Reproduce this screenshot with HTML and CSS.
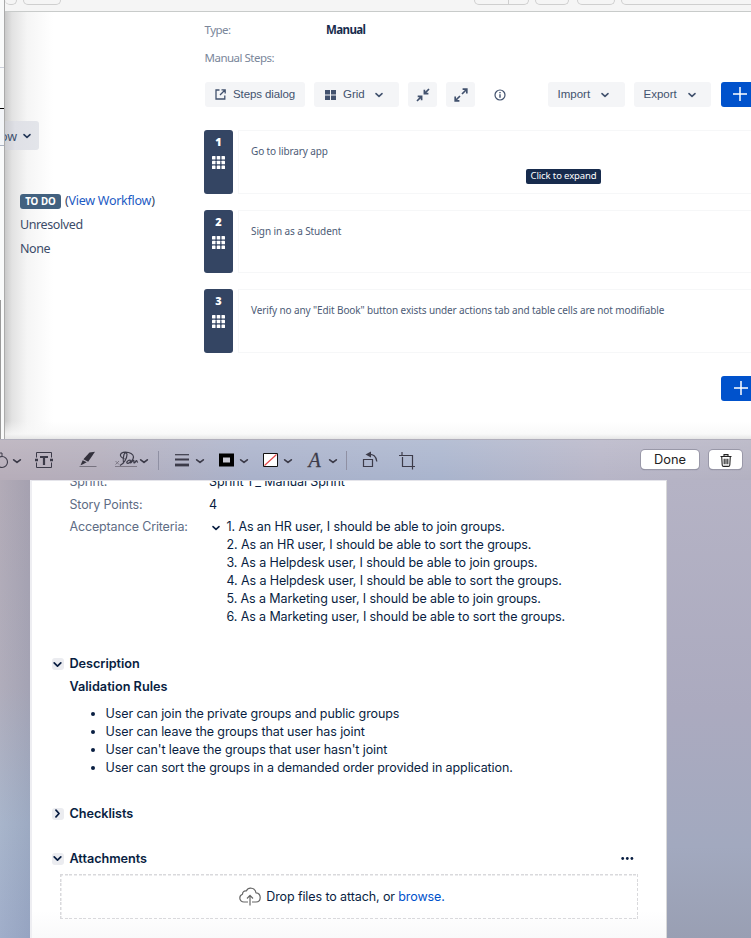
FILE: index.html
```html
<!DOCTYPE html>
<html lang="en">
<head>
<meta charset="utf-8">
<title>Manual Steps</title>
<link rel="stylesheet" href="styles.css">
</head>
<body>
<svg width="0" height="0" class="defs">
  <symbol id="chev" viewBox="0 0 10 10"><path d="M2 3.6l3 2.8 3-2.8" fill="none" stroke="currentColor" stroke-width="1.6" stroke-linecap="round" stroke-linejoin="round"/></symbol>
  <symbol id="dots" viewBox="0 0 13 13"><g fill="#fff"><rect width="3.5" height="3.5" rx=".6"/><rect x="4.75" width="3.5" height="3.5" rx=".6"/><rect x="9.5" width="3.5" height="3.5" rx=".6"/><rect y="4.75" width="3.5" height="3.5" rx=".6"/><rect x="4.75" y="4.75" width="3.5" height="3.5" rx=".6"/><rect x="9.5" y="4.75" width="3.5" height="3.5" rx=".6"/><rect y="9.5" width="3.5" height="3.5" rx=".6"/><rect x="4.75" y="9.5" width="3.5" height="3.5" rx=".6"/><rect x="9.5" y="9.5" width="3.5" height="3.5" rx=".6"/></g></symbol>
  <symbol id="plus" viewBox="0 0 14 14"><path d="M7 0v14M0 7h14" stroke="#fff" stroke-width="1.5"/></symbol>
</svg>

<section class="browser">
  <div class="edge"><i class="e1"></i><i class="e2"></i><i class="e3"></i><i class="e4"></i></div>
  <div class="window">
    <div class="chrome">
      <span class="tab t1"></span><span class="tab t2"></span><span class="tab t3"></span><span class="tab t4"></span><span class="tab t5"></span><span class="tab t6"></span><span class="tab t7"></span>
    </div>
    <div class="page">
      <aside class="side">
        <div class="flowbtn"><span>ow</span><svg width="10" height="10"><use href="#chev"/></svg></div>
        <div class="status"><b class="todo">TO DO</b><span class="wf">(<a>View Workflow</a>)</span></div>
        <div class="res">Unresolved</div>
        <div class="res">None</div>
      </aside>
      <main class="main">
        <div class="field"><span class="lab">Type:</span><b>Manual</b></div>
        <div class="field"><span class="lab">Manual Steps:</span></div>
        <div class="tools">
          <div class="btn steps"><svg width="11" height="11" viewBox="0 0 11 11" fill="none" stroke="#42526e" stroke-width="1.3"><path d="M4.5 1H1v9h8.800V6.500M6.500 .8h3.700v3.700M10 1L5 6"/></svg><span>Steps dialog</span></div>
          <div class="btn grid"><svg width="11" height="10" viewBox="0 0 11 10" fill="#42526e"><path d="M0 0h5v4.500H0zM6 0h5v4.500H6zM0 5.500h5V10H0zM6 5.500h5V10H6z"/></svg><span>Grid</span><svg width="10" height="10"><use href="#chev"/></svg></div>
          <div class="btn sq"><svg width="14" height="14" viewBox="0 0 14 14" fill="none" stroke="#42526e" stroke-width="1.700"><path d="M13 1L8.700 5.300M8.400 1.800v3.900h4M1 13l4.300-4.300M1.700 8.300h3.900v4"/></svg></div>
          <div class="btn sq"><svg width="14" height="14" viewBox="0 0 14 14" fill="none" stroke="#42526e" stroke-width="1.700"><path d="M8 6l4.500-4.500M8.600 1.200h4.200v4.200M6 8l-4.500 4.500M1.200 8.600v4.200h4.200"/></svg></div>
          <svg class="info" width="12" height="12" viewBox="0 0 12 12" fill="none" stroke="#42526e" stroke-width="1.200"><circle cx="6" cy="6" r="5"/><path d="M6 5.200v3.500M6 3v1.300" stroke-width="1.400"/></svg>
          <div class="btn imp"><span>Import</span><svg width="10" height="10"><use href="#chev"/></svg></div>
          <div class="btn exp"><span>Export</span><svg width="10" height="10"><use href="#chev"/></svg></div>
          <div class="add"><svg width="14" height="14"><use href="#plus"/></svg></div>
        </div>
        <div class="stepsl">
          <div class="step"><div class="num"><b>1</b><svg width="13" height="13"><use href="#dots"/></svg></div><div class="body"><span>Go to library app</span><span class="tip">Click to expand</span></div></div>
          <div class="step"><div class="num"><b>2</b><svg width="13" height="13"><use href="#dots"/></svg></div><div class="body"><span>Sign in as a Student</span></div></div>
          <div class="step"><div class="num"><b>3</b><svg width="13" height="13"><use href="#dots"/></svg></div><div class="body"><span>Verify no any "Edit Book" button exists under actions tab and table cells are not modifiable</span></div></div>
        </div>
        <div class="add last"><svg width="14" height="14"><use href="#plus"/></svg></div>
      </main>
    </div>
  </div>
</section>

<section class="preview">
  <header class="markup">
    <svg width="440" height="41" viewBox="0 439 440 41" fill="none" stroke="#3c3b49" stroke-width="1.500">
      <path d="M-2 453h4v3" stroke-width="1"/><circle cx="2" cy="462" r="5.500" stroke-width="1.100"/>
      <g stroke-width="1.700" stroke-linecap="round" stroke-linejoin="round"><path d="M13.700 459.800l3.300 2.600 3.300-2.600M140.700 459.800l3.300 2.600 3.300-2.600M196.700 459.800l3.300 2.600 3.300-2.600M240.700 459.800l3.300 2.600 3.300-2.600M284.700 459.800l3.300 2.600 3.300-2.600M329.700 459.800l3.300 2.600 3.300-2.600"/></g>
      <path d="M36.500 457.500v-5h15v5M36.500 462.500v5h15v-5" stroke-width="1"/><path d="M35 460h3M50 460h3" stroke-width="2.500"/><path d="M40 457h8M44 456v9" stroke-width="2.200"/>
      <path d="M89.500 452.500l5.500-.8-6.800 10-4.800-2.500z" fill="#33313c" stroke="none"/><path d="M82.700 460.200l4 2-3.700 2-2.500 1z" fill="#33313c" stroke="none"/><path d="M79.500 466.500h17" stroke="#77737f" stroke-width="1"/>
      <path d="M115.500 461l3.500 3.500m0-3.500l-3.500 3.500M115 466.500h22" stroke="#77737f" stroke-width=".9"/><path d="M120 465.500c4-2 7-7 7-11 0-2-2-2.500-3 0s-1 6-.5 9M124.500 459c-2.500-1-4.500-2.500-4-4.500s4-3 8-2 6 3.500 4.500 6.500-5 5-6 4 1.500-3 3-3c1 0-.5 3 .5 3s2-2.700 3-2.700-.2 2.700.8 2.700 1.400-2.500 2.200-2.500 0 2 1.500 1.500" stroke-width="1.200"/>
      <path d="M158.500 451v19M346.500 451v19" stroke="#8f90a3" stroke-width="1"/>
      <path d="M175 454.700h14" stroke-width="1.200"/><path d="M175 459.500h14" stroke-width="2"/><path d="M175 465h14" stroke-width="2.800"/>
      <path d="M221 455.500h11v9h-11z" fill="#c9c9d3" stroke="#000" stroke-width="4"/>
      <path d="M263.500 453.500h14v13h-14z" fill="#fff" stroke="#111" stroke-width="1"/><path d="M264.500 465.500l12-11" stroke="#e5484b" stroke-width="1.200"/>
      <text x="308.500" y="467" font-family="Liberation Serif" font-style="italic" font-size="20" fill="#3c3b49" stroke="#3c3b49" stroke-width=".3">A</text>
      <path d="M363.500 459.500h9v7h-9zM368 454.500c5-1 8.500 2 8.800 7" stroke-width="1.200"/><path d="M371 451.500v6l-5.500-3z" fill="#3c3b49" stroke="none"/>
      <path d="M402 452v3M399 455.500h13.500v11M402.500 457v9.500h12.500M412.500 467v2.500" stroke-width="1.200"/>
    </svg>
    <div class="mbtns"><div class="mb done">Done</div><div class="mb trash"><svg width="12" height="13" viewBox="0 0 12 13" fill="none" stroke="#222" stroke-width="1.100"><path d="M.5 2.500h11M4 2.300V.6h4v1.700M1.700 2.500l.5 8.500q.1 1.400 1.400 1.400h4.800q1.300 0 1.400-1.400l.5-8.500M4.200 4.700v5.500M6 4.700v5.500M7.800 4.700v5.500" /></svg></div></div>
  </header>
  <div class="stage">
    <article class="paper">
      <div class="row r1"><span class="k">Sprint:</span><span class="v sprint">Sprint 1 _ Manual Sprint</span></div>
      <div class="row"><span class="k">Story Points:</span><span class="v">4</span></div>
      <div class="row acc"><span class="k">Acceptance Criteria:</span><svg width="10" height="10"><use href="#chev"/></svg>
        <div class="crit"><div>1. As an HR user, I should be able to join groups.</div><div>2. As an HR user, I should be able to sort the groups.</div><div>3. As a Helpdesk user, I should be able to join groups.</div><div>4. As a Helpdesk user, I should be able to sort the groups.</div><div>5. As a Marketing user, I should be able to join groups.</div><div>6. As a Marketing user, I should be able to sort the groups.</div></div>
      </div>
      <h3 class="h desc"><i><svg width="11" height="11"><use href="#chev"/></svg></i>Description</h3>
      <h4 class="rules">Validation Rules</h4>
      <ul class="list"><li>User can join the private groups and public groups</li><li>User can leave the groups that user has joint</li><li>User can't leave the groups that user hasn't joint</li><li>User can sort the groups in a demanded order provided in application.</li></ul>
      <h3 class="h check"><i class="shut"><svg width="11" height="11"><use href="#chev"/></svg></i>Checklists</h3>
      <h3 class="h att"><i><svg width="11" height="11"><use href="#chev"/></svg></i>Attachments<svg class="more" width="13" height="3" viewBox="0 0 13 3" fill="#091e42"><circle cx="1.700" cy="1.500" r="1.400"/><circle cx="6.300" cy="1.500" r="1.400"/><circle cx="10.900" cy="1.500" r="1.400"/></svg></h3>
      <div class="drop"><svg width="22" height="20" viewBox="0 0 22 20" fill="none" stroke="#666" stroke-width="1.200" stroke-linejoin="round"><path d="M9 15H5C2.500 15 .8 13.300.8 11c0-2 1.200-3.300 2.700-3.800C3.500 5 5 3.600 7.300 4 8.300 2 10 1 12 1.200c2.800.2 4.600 2 5 4.600 2.500.2 4.200 2.300 4.200 4.700 0 2.700-1.800 4.500-4.200 4.500h-4M11 18.500V8.500M8 11.500l3-3.200 3 3.200"/></svg><span>Drop files to attach, or <a>browse.</a></span></div>
    </article>
  </div>
</section>
</body>
</html>
```
FILE: styles.css
```css
*{box-sizing:border-box}
body{margin:0;width:751px;height:938px;overflow:hidden;background:#fff;color:#172b4d;font-family:"Liberation Sans",sans-serif}
.defs{position:absolute}
svg{display:block;flex:none;overflow:visible}
i{font-style:normal}
a{color:#0052cc}
.browser{display:flex;height:439px;overflow:hidden}
.edge{width:4px;display:flex;flex-direction:column;background:#f9fafa;flex:none}
.edge i{display:block}
.e1{height:68px;border-bottom:1px solid #ccd0da}
.e2{height:41px;border-bottom:1px solid #000}
.e3{height:37px;background:#f3f5f8;border-bottom:1px solid #aab2c2}
.e4{margin-top:154px;height:139px;width:1px;background:#999}
.window{flex:1;min-width:0;border-left:1px solid #aaa}
.chrome{height:12px;background:#f5f5f5;border-bottom:1px solid #c8cbca;display:flex;align-items:flex-start}
.tab{height:5px;border:1px solid #cfcfcf;border-top:0;border-radius:0 0 5px 5px;flex:none}
.t1{width:12px;border-left:0}
.t2{width:38px;margin-left:6px}
.t3{width:35px;margin-left:413px;border-radius:0 0 0 5px}
.t4{width:21px;margin-left:-1px;border-radius:0 0 5px 0}
.t5{width:34px;margin-left:6px}
.t6{width:38px;margin-left:8px}
.t7{width:140px;margin-left:6px}
.page{height:427px;display:flex;background:linear-gradient(to top,#e6e6e6 0,#f8f8f8cc 5px,#fff0 18px),linear-gradient(to right,#c9c9c9 0,#e2e2e2 7px,#f5f5f5 22px,#fff 48px)}
.side{width:199px;flex:none;font-family:"Noto Sans",sans-serif}
.flowbtn{margin-top:109px;width:34px;height:29px;border-radius:0 3px 3px 0;background:linear-gradient(to right,#cccdd2 0,#dfe0e6 10px,#e3e5ea);display:flex;align-items:center;gap:6px;font:12.500px "Noto Sans";color:#42526e;overflow:hidden}
.flowbtn span{margin-left:-5px;margin-top:2px}
.flowbtn svg{color:#253858;margin-left:-1px}
.status{margin:42px 0 0 15px;height:17px;display:flex;align-items:center;font-size:12.500px}
.todo{width:41px;height:15px;border-radius:3px;background:#42617f;color:#fff;font:bold 9.800px/15px "Noto Sans";text-align:center;margin-top:1px}
.wf{margin-left:4px;white-space:nowrap;letter-spacing:-.26px;color:#344563}
.wf a{color:#1d5bc4}
.res{margin:7px 0 0 15px;height:17px;line-height:17px;font-size:12.500px;letter-spacing:-.4px;color:#3b4b68}
.main{flex:1;min-width:0;overflow:hidden;padding:3px 0 0 .5px}
.field{height:28px;display:flex;align-items:center;font:11.500px "Noto Sans";color:#172b4d}
.field b{letter-spacing:-.6px}
.lab{width:121.500px;color:#7a869a;white-space:nowrap;letter-spacing:-.5px}
.tools{display:flex;align-items:center;margin-top:11px;height:25px;width:600px;font-size:11.500px;color:#42526e}
.btn{height:25px;background:#f4f5f7;border-radius:3px;display:flex;align-items:center;flex:none;white-space:nowrap}
.btn span{margin-top:-1px}
.steps{width:100px;padding-left:10.500px;gap:7px;letter-spacing:-.1px}
.grid{width:85px;margin-left:9.500px;padding-left:10.500px;gap:7.500px}
.grid svg:last-child{margin-left:2px}
.sq{width:29px;margin-left:9px;justify-content:center}
.info{margin-left:18.500px}
.imp{width:77px;margin-left:42px;padding-left:10px;gap:10px}
.exp{width:77px;margin-left:9px;padding-left:10px;gap:10px}
.add{width:60px;height:25px;border-radius:3px;background:#0052cc;margin-left:10px;padding:5px 12.500px;flex:none}
.stepsl{display:flex;flex-direction:column;gap:16px;margin-top:23px}
.step{display:flex;height:63.500px;gap:5px}
.num{width:29px;margin-left:-.5px;background:#344563;border-radius:3px;display:flex;flex-direction:column;align-items:center;color:#fff;font:bold 11px/14px "Noto Sans";padding-top:5px;gap:7px;flex:none}
.body{flex:1;border:1px solid #f6f7f8;border-right:0;padding:13px 0 0 12px;font:10px/14px "Noto Sans";letter-spacing:-.11px;color:#4c5b76;white-space:nowrap}
.body span{display:block}
.body .tip{width:75px;height:15px;border-radius:2px;background:#172b4d;color:#fff;font:9.500px/14px "Noto Sans";letter-spacing:-.12px;text-align:center;margin:11px 0 0 275px}
.last{margin:23.500px 0 0 516.500px}
.preview{height:499px;background:linear-gradient(to right,#b6adb9 0,#b3adbb 100px,#a9b1ca 250px,#a9b4cd 440px,#b7b5c7 600px,#b3b1c1 751px)}
.markup{height:41px;display:flex;justify-content:space-between;border-top:1px solid #b0aebb;background:linear-gradient(to bottom,#ffffff26,#ffffff00);padding-right:9px}
.markup>svg{margin-top:-1px}
.mbtns{display:flex;gap:10px;padding-top:10px}
.mb{height:19px;background:#fff;border-radius:4px;box-shadow:0 0 0 1px #9998a8,0 1px 1px #77778a;display:flex;align-items:center;justify-content:center;font:12.800px Inter;color:#222}
.done{width:58px}
.trash{width:33px}
.trash svg{margin-top:2px}
.stage{height:458px;padding-left:29.500px;background:linear-gradient(to right,#0000 0,#4050781c 30px,#0000 31px),linear-gradient(to bottom,#b5b3c5 0,#abaabf 50%,#a2a9bf 80%,#999fb3 100%) right/84px 100% no-repeat,linear-gradient(to bottom,#b2abb7 0,#b0adbb 45%,#a8b5cb 75%,#a0aeca 100%)}
.paper{width:637px;height:458px;background:linear-gradient(#fff 94%,#f9f9fa);border-left:2px solid #eeeef2;border-right:1px solid #d8d8d8;border-top:1px solid #e4e4ea;overflow:hidden;padding-left:38px;font:12.500px/18px Inter,sans-serif;letter-spacing:-.1px;color:#091e42}
.row{display:flex;height:22.500px;white-space:nowrap}
.r1{margin-top:-8px}
.k{width:139.500px;color:#5e6c84;flex:none;letter-spacing:-.15px}
.acc{height:112px}
.acc svg{margin:5px 6px 0 1.500px}
.h{display:flex;align-items:center;font-size:12.700px;font-weight:600;line-height:18px;margin:0 0 0 -18px;letter-spacing:-.05px}
.h i{width:12px;height:12px;background:#ebecf0;border-radius:3px;margin-right:6px;display:flex;align-items:center;justify-content:center}
.shut svg{transform:rotate(-90deg)}
.desc{margin-top:25px}
.rules{margin:4.500px 0 0;font-size:12.700px;font-weight:600;letter-spacing:0}
.list{margin:9px 0 0;padding-left:36px}
.check{margin-top:28px}
.att{margin-top:27px}
.more{margin-left:auto;margin-right:32px}
.drop{margin:6.500px 0 0 -9.500px;width:578px;height:45px;padding:1px 14px 0 0;display:flex;align-items:center;justify-content:center;gap:5px;background:repeating-linear-gradient(to right,#d9d9dc 0 3px,#fff0 3px 4.700px) top/100% 1.500px no-repeat,repeating-linear-gradient(to right,#d9d9dc 0 3px,#fff0 3px 4.700px) bottom/100% 1.500px no-repeat,repeating-linear-gradient(#d9d9dc 0 3px,#fff0 3px 4.700px) left/1.500px 100% no-repeat,repeating-linear-gradient(#d9d9dc 0 3px,#fff0 3px 4.700px) right/1.500px 100% no-repeat}
```
